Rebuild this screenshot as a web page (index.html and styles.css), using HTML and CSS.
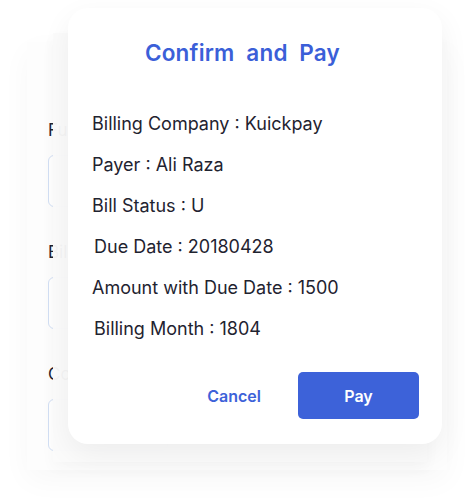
FILE: index.html
```html
<!DOCTYPE html>
<html>
<head>
<meta charset="utf-8">
<link rel="stylesheet" href="styles.css">
</head>
<body>
<div class="page">
  <div class="card">
    <div class="field">
      <div class="label">Full Name</div>
      <div class="input"></div>
    </div>
    <div class="field">
      <div class="label">Bill Number</div>
      <div class="input"></div>
    </div>
    <div class="field">
      <div class="label">Company</div>
      <div class="input"></div>
    </div>
  </div>
  <div class="overlay"></div>
  <div class="modal">
    <h2 class="title">Confirm&nbsp; and&nbsp; Pay</h2>
    <div class="details">
      <div class="row">Billing Company : Kuickpay</div>
      <div class="row">Payer : Ali Raza</div>
      <div class="row">Bill Status : U</div>
      <div class="row indent">Due Date : 20180428</div>
      <div class="row">Amount with Due Date : 1500</div>
      <div class="row indent">Billing Month : 1804</div>
    </div>
    <div class="actions">
      <button class="btn-cancel">Cancel</button>
      <button class="btn-pay">Pay</button>
    </div>
  </div>
</div>
</body>
</html>
```

FILE: styles.css
```css
* { box-sizing: border-box; }
html, body { margin: 0; padding: 0; background: #ffffff; }
body {
  font-family: Inter, "Noto Sans", sans-serif;
  width: 471px;
  height: 502px;
  overflow: hidden;
}
.page {
  position: relative;
  width: 471px;
  height: 502px;
  padding: 42px 24px 0 27px;
}
.card {
  height: 428px;
  width: 420px;
  background: #fdfdfd;
  box-shadow: 0 10px 28px rgba(0, 0, 0, 0.035);
  padding: 78px 0 0 21px;
  display: flex;
  flex-direction: column;
  gap: 35px;
}
.field {
  display: flex;
  flex-direction: column;
  gap: 15px;
}
.label {
  font-size: 17px;
  color: #1f2330;
  line-height: 20px;
}
.input {
  height: 52px;
  width: 120px;
  border: 1px solid #d3e0f5;
  border-radius: 6px;
  background: #ffffff;
}
.overlay {
  position: absolute;
  left: 53px;
  top: 33px;
  width: 374px;
  height: 429px;
  background: rgba(251, 251, 251, 0.97);
  box-shadow: 0 6px 14px rgba(0, 0, 0, 0.03);
}
.modal {
  position: absolute;
  left: 68px;
  top: 8px;
  width: 374px;
  height: 436px;
  background: #ffffff;
  border-radius: 20px;
  box-shadow: 0 10px 30px rgba(0, 0, 0, 0.06);
  padding: 31px 23px 0 24px;
}
.title {
  margin: 0 26px 0 0;
  text-align: center;
  font-size: 22.5px;
  font-weight: 600;
  color: #3b5fd8;
  line-height: 28px;
  letter-spacing: 0.2px;
}
.details {
  margin-top: 46px;
  display: flex;
  flex-direction: column;
  gap: 19px;
}
.row {
  font-size: 18px;
  line-height: 22px;
  color: #1f2330;
}
.indent { padding-left: 2px; }
.actions {
  margin-top: 32px;
  display: flex;
  justify-content: flex-end;
  align-items: center;
  gap: 37px;
}
.btn-cancel {
  border: none;
  background: none;
  font-family: Inter, sans-serif;
  font-size: 16px;
  font-weight: 600;
  color: #3d62d9;
  padding: 0;
}
.btn-pay {
  border: none;
  background: #3d62d9;
  color: #ffffff;
  font-family: Inter, sans-serif;
  font-size: 16px;
  font-weight: 600;
  width: 121px;
  height: 47px;
  border-radius: 5px;
}
```
